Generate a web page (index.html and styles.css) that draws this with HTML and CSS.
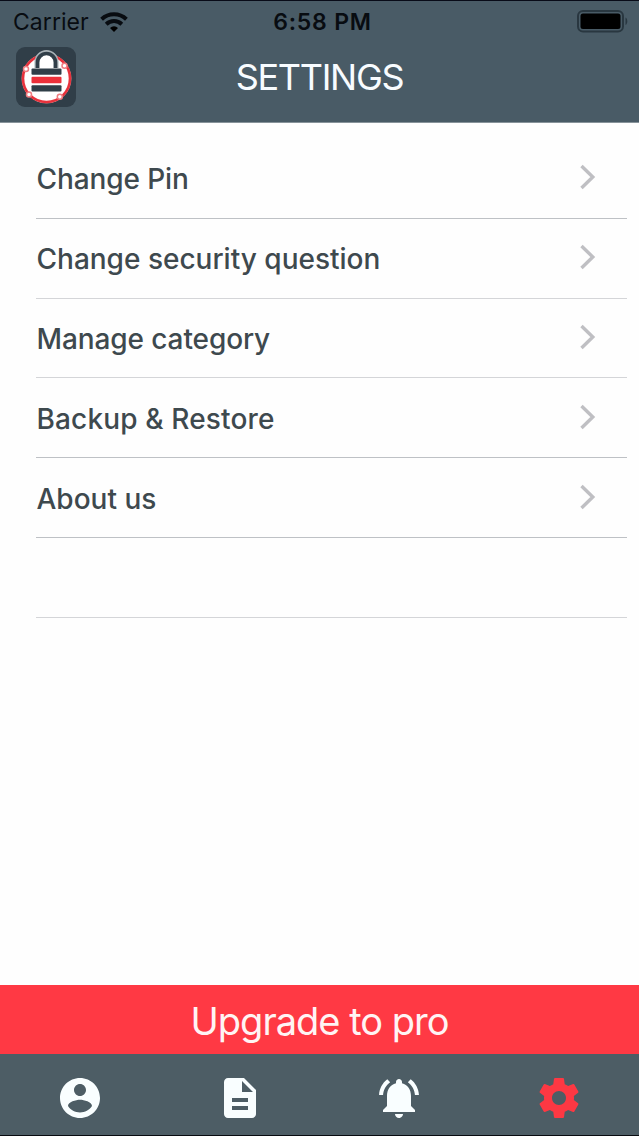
FILE: index.html
```html
<!DOCTYPE html>
<html lang="en">
<head>
<meta charset="utf-8">
<title>Settings</title>
<link rel="stylesheet" href="styles.css">
</head>
<body>
<div class="screen">
  <header class="header">
    <div class="status">
      <div class="carrier"><span class="carrier-name">Carrier</span>
        <svg class="wifi" viewBox="0 0 28 20"><path d="M14 20l-4-4.1a6 6 0 0 1 8 0z"/><path class="arc" d="M6.2 12.2a11.4 11.4 0 0 1 15.6 0M1.6 7.2a18 18 0 0 1 24.8 0"/></svg>
      </div>
      <span class="time">6:58 PM</span>
      <svg class="battery" viewBox="0 0 52 24"><rect class="case" x="1" y="1" width="45" height="20.5" rx="5"/><rect x="3.5" y="3.5" width="40" height="15.5" rx="2.5"/><path class="cap" d="M48.5 7.5c2.4 1 2.4 6.5 0 7.5z"/></svg>
    </div>
    <div class="titlebar">
      <svg class="logo" viewBox="0 0 60 60">
        <rect class="tile" width="60" height="60" rx="9"/>
        <circle class="halo" cx="30.5" cy="31.500" r="24.500"/>
        <circle class="ring" cx="30.5" cy="31.500" r="23.500"/>
        <path class="shackle-edge" d="M21 21v-6a9.500 9.500 0 0 1 19 0v6"/>
        <path class="shackle" d="M21.500 21v-5.500a9 9 0 0 1 18 0v5.500"/>
        <rect class="tile" x="15.500" y="21.500" width="30" height="6.200" rx="1"/>
        <rect class="red" x="15.500" y="29.700" width="30" height="6.500" rx="1"/>
        <rect class="tile" x="15.500" y="38.300" width="30" height="6.200" rx="1"/>
        <g class="nodes"><circle cx="10" cy="22" r="2.500"/><circle cx="48.500" cy="18.800" r="2.500"/><circle cx="13" cy="47.500" r="2.500"/><circle cx="43.800" cy="49.700" r="2.500"/></g>
      </svg>
      <h1 class="title">SETTINGS</h1>
    </div>
  </header>
  <main class="list">
    <div class="row"><span class="label pin">Change Pin</span><svg class="chevron" viewBox="0 0 18 28"><path d="M2.5 3l11.3 11-11.3 11"/></svg></div>
    <div class="row light"><span class="label question">Change security question</span><svg class="chevron" viewBox="0 0 18 28"><path d="M2.5 3l11.3 11-11.3 11"/></svg></div>
    <div class="row light"><span class="label category">Manage category</span><svg class="chevron" viewBox="0 0 18 28"><path d="M2.5 3l11.3 11-11.3 11"/></svg></div>
    <div class="row"><span class="label backup">Backup &amp; Restore</span><svg class="chevron" viewBox="0 0 18 28"><path d="M2.5 3l11.3 11-11.3 11"/></svg></div>
    <div class="row"><span class="label about">About us</span><svg class="chevron" viewBox="0 0 18 28"><path d="M2.5 3l11.3 11-11.3 11"/></svg></div>
    <div class="row light"></div>
  </main>
  <div class="upgrade"><span class="upgrade-text">Upgrade to pro</span></div>
  <nav class="tabs">
    <div class="tab"><svg class="icon" viewBox="0 0 24 24"><path d="M12 2C6.480 2 2 6.480 2 12s4.480 10 10 10 10-4.480 10-10S17.520 2 12 2zm0 3c1.660 0 3 1.340 3 3s-1.340 3-3 3-3-1.340-3-3 1.340-3 3-3zm0 14.200c-2.500 0-4.710-1.280-6-3.220.03-1.990 4-3.080 6-3.080 1.990 0 5.970 1.090 6 3.080-1.290 1.940-3.500 3.220-6 3.220z"/></svg></div>
    <div class="tab"><svg class="icon" viewBox="0 0 24 24"><path d="M14 2H6c-1.100 0-1.990.9-1.990 2L4 20c0 1.100.89 2 1.990 2H18c1.100 0 2-.9 2-2V8l-6-6zm2 16H8v-2h8v2zm0-4H8v-2h8v2zm-3-5V3.500L18.500 9H13z"/></svg></div>
    <div class="tab"><svg class="icon" viewBox="0 0 24 24"><path d="M7.580 4.080L6.150 2.650C3.750 4.480 2.170 7.300 2.030 10.500h2c.15-2.650 1.510-4.970 3.550-6.420zm12.390 6.420h2c-.15-3.200-1.730-6.020-4.120-7.850l-1.420 1.430c2.020 1.450 3.390 3.770 3.540 6.420zM18 11c0-3.070-1.640-5.640-4.500-6.320V4c0-.83-.67-1.500-1.500-1.500s-1.500.67-1.500 1.500v.68C7.630 5.360 6 7.920 6 11v5l-2 2v1h16v-1l-2-2v-5zm-6 11c.14 0 .27-.01.4-.04.65-.14 1.180-.58 1.440-1.180.1-.24.15-.5.15-.78h-4c.01 1.100.9 2 2.010 2z"/></svg></div>
    <div class="tab active"><svg class="icon" viewBox="0 0 24 24"><path d="M19.430 12.980c.04-.32.07-.64.07-.98s-.03-.66-.07-.98l2.110-1.650c.19-.15.24-.42.12-.64l-2-3.460c-.12-.22-.39-.3-.61-.22l-2.490 1c-.52-.4-1.080-.73-1.690-.98l-.38-2.650C14.460 2.180 14.250 2 14 2h-4c-.25 0-.46.18-.49.42l-.38 2.650c-.61.25-1.170.59-1.690.98l-2.490-1c-.23-.09-.49 0-.61.22l-2 3.460c-.13.22-.07.49.12.64l2.110 1.650c-.04.32-.07.65-.07.98s.03.66.07.98l-2.110 1.650c-.19.15-.24.42-.12.64l2 3.460c.12.22.39.3.61.22l2.490-1c.52.4 1.080.73 1.690.98l.38 2.650c.03.24.24.42.49.42h4c.25 0 .46-.18.49-.42l.38-2.650c.61-.25 1.170-.59 1.690-.98l2.490 1c.23.09.49 0 .61-.22l2-3.460c.12-.22.07-.49-.12-.64l-2.110-1.650zM12 15.500c-1.930 0-3.500-1.570-3.500-3.500s1.570-3.500 3.500-3.500 3.500 1.570 3.500 3.500-1.570 3.500-3.500 3.500z"/></svg></div>
  </nav>
</div>
</body>
</html>
```
FILE: styles.css
```css
* { box-sizing: border-box; }
body { margin: 0; font-family: Inter, "Liberation Sans", sans-serif; }
svg { display: block; flex: none; }
.screen { width: 639px; height: 1136px; display: flex; flex-direction: column; background: #fefefe; }
.header { height: 123px; flex: none; background: #495b66; border-top: 1px solid #080b18; border-bottom: 1px solid #87939a; }
.status { height: 41px; display: grid; grid-template-columns: 1fr auto 1fr; align-items: center; padding: 0 10px 0 13px; color: #080c11; }
.carrier { display: flex; align-items: center; gap: 11px; font-size: 23px; }
.carrier-name { letter-spacing: 0.05px; }
.wifi { width: 28px; height: 20px; }
.arc { fill: none; stroke: #080c11; stroke-width: 4; }
.time { font-size: 23px; font-weight: 600; letter-spacing: 0.8px; padding-left: 3px; }
.battery { width: 52px; height: 24px; justify-self: end; }
.case { fill: none; stroke: #293740; stroke-width: 2; }
.cap { fill: #293740; }
.titlebar { height: 80px; display: grid; grid-template-columns: 60px 1fr 60px; padding: 5px 16px 0; }
.logo { width: 60px; height: 60px; }
.tile { fill: #303e48; }
.halo { fill: #fff; stroke: #c98b90; stroke-width: 1px; }
.ring { fill: none; stroke: #e8323c; stroke-width: 2.6px; }
.shackle-edge { fill: #fff; stroke: #aab3b8; stroke-width: 5px; }
.shackle { fill: none; stroke: #303e48; stroke-width: 3.6px; }
.red { fill: #ec303a; }
.nodes { fill: #fff; stroke: #ef7c80; stroke-width: 1.5px; }
.title { margin: 0; text-align: center; color: #f8fcff; font-size: 36px; font-weight: 400; line-height: 60px; letter-spacing: -1.3px; }
.list { flex: 1; padding: 16px 12px 0 36px; }
.row { height: 79.8px; display: flex; align-items: center; justify-content: space-between; padding: 0 30px 0 0.5px; border-bottom: 1px solid #bec1c5; }
.row.light { border-color: #d4d5d8; }
.label { color: #3e494e; font-size: 28px; font-weight: 500; white-space: nowrap; padding-top: 2px; }
.pin { letter-spacing: -0.1px; }
.category { letter-spacing: -0.1px; }
.backup { letter-spacing: 0.15px; }
.chevron { width: 18px; height: 28px; margin-bottom: 2px; }
.chevron path { fill: none; stroke: #bfbfc3; stroke-width: 3.4px; }
.upgrade { height: 69px; flex: none; background: #ff3944; color: #fff4f4; text-align: center; font-size: 38px; line-height: 73px; }
.upgrade-text { letter-spacing: -1px; }
.tabs { height: 82px; flex: none; display: grid; grid-template-columns: repeat(4, 1fr); background: #4d5d65; border-bottom: 1px solid #080b10; }
.tab { display: flex; justify-content: center; padding-top: 19.5px; color: #f9feff; }
.icon { width: 48px; height: 48px; fill: currentColor; }
.tab.active { color: #fd3843; }
```
